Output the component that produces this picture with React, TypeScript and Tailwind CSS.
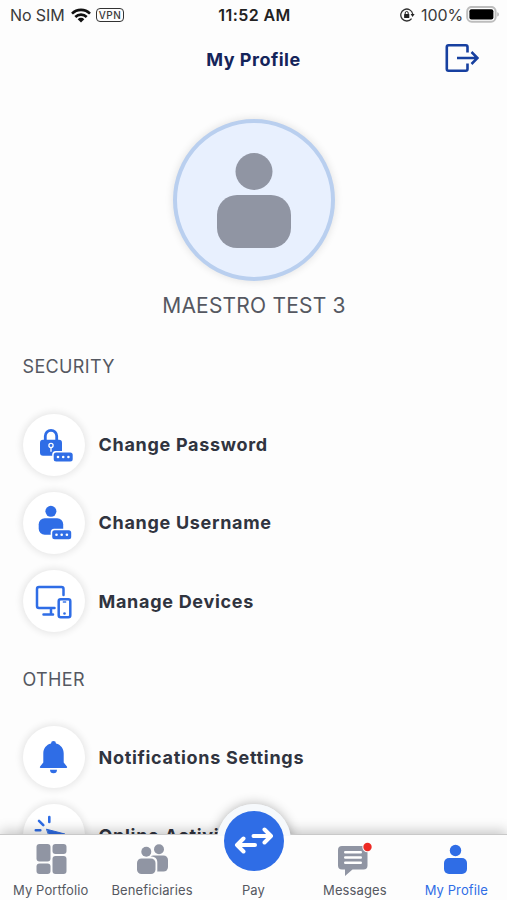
import type { ReactNode } from "react";

const BLUE = "#2f6de6";
const GREY = "#9095a3";

const StatusBar = () => (
  <div className="flex h-[30px] shrink-0 items-center text-[16px] leading-none text-[#3a3a3a]">
    <div className="flex flex-1 items-center pl-[10px]">
      <span className="w-[61px] whitespace-nowrap tracking-[-0.1px]">No SIM</span>
      <svg width="20" height="15" viewBox="0 0 20 15" fill="none" stroke="#111" strokeWidth="2.6">
        <path d="M1 5.6a12.7 12.7 0 0 1 18 0" />
        <path d="M4.3 9a8 8 0 0 1 11.4 0" />
        <path d="M10 14.5 6.7 11.2a4.7 4.7 0 0 1 6.6 0Z" fill="#111" stroke="none" />
      </svg>
      <span className="ml-[5px] flex h-[14px] w-[28px] items-center justify-center rounded-[4px] border-[1.5px] border-[#333] text-[10px] font-medium tracking-[0.4px]">
        VPN
      </span>
    </div>
    <span className="text-[16px] font-semibold tracking-[0.4px] text-[#222]">11:52 AM</span>
    <div className="flex flex-1 items-center justify-end pr-[8px]">
      <svg width="15" height="14" viewBox="0 0 15 14" fill="none">
        <path d="M11.6 10.6A6 6 0 1 1 12.7 6" stroke="#333" strokeWidth="1.3" />
        <path d="M10.6 6h4l-2 3Z" fill="#222" />
        <path d="M5.2 6.5V5a1.5 1.5 0 0 1 3 0v1.5" stroke="#222" />
        <rect x="4.1" y="6" width="5.2" height="4" rx=".6" fill="#222" />
      </svg>
      <span className="ml-[6px] tracking-[-0.1px]">100%</span>
      <svg className="ml-[3px]" width="33" height="18" viewBox="0 0 33 18">
        <rect x="1.2" y=".9" width="28.4" height="14.8" rx="4.5" fill="#fff" stroke="#bdbdbd" strokeWidth="2" />
        <rect x="3.4" y="3.2" width="24" height="10.2" rx="2" fill="#000" />
        <path d="M31.4 6.2c1.8.6 1.8 3.8 0 4.4Z" fill="#aaa" />
      </svg>
    </div>
  </div>
);

const Dots = ({ x, y }: { x: number; y: number }) => (
  <g transform={`translate(${x} ${y})`}>
    <rect x="-1.5" y="-1.5" width="22" height="12" rx="3.5" fill="#fff" />
    <rect width="19" height="9" rx="2.5" fill={BLUE} />
    <g fill="#fff">
      <circle cx="4.3" cy="4.5" r="1.3" />
      <circle cx="9.5" cy="4.5" r="1.3" />
      <circle cx="14.7" cy="4.5" r="1.3" />
    </g>
  </g>
);

const LockIcon = () => (
  <g transform="translate(-0.5 -0.7)">
    <path d="M25.3 28v-5.2a5.7 5.7 0 0 1 11.4 0V28" fill="none" stroke={BLUE} strokeWidth="2.8" />
    <rect x="20" y="26.5" width="22" height="16" rx="3" fill={BLUE} />
    <circle cx="31" cy="32.2" r="2.1" fill="none" stroke="#fff" strokeWidth="1.3" />
    <path d="M31 34.3v4.2" stroke="#fff" strokeWidth="1.3" />
    <Dots x={33.7} y={39.2} />
  </g>
);

const UserIcon = () => (
  <g transform="translate(-0.3 -0.7)">
    <circle cx="30.7" cy="20" r="5.5" fill={BLUE} />
    <rect x="18.5" y="27" width="24.5" height="16.5" rx="6" fill={BLUE} />
    <Dots x={32} y={39} />
  </g>
);

const DevicesIcon = () => (
  <g transform="translate(-1 0)" fill="none" stroke={BLUE} strokeWidth="2.5">
    <path d="M44 25v-6a2 2 0 0 0-2-2H19.5a2 2 0 0 0-2 2v17a2 2 0 0 0 2 2H35M31.5 38v6M24 44.5h9.5" strokeLinecap="round" />
    <rect x="39.2" y="29.2" width="11.6" height="18.1" rx="2" />
    <path d="M43.3 32h3.4" strokeWidth="1.4" />
    <circle cx="45" cy="43.5" r="1.3" fill={BLUE} stroke="none" />
  </g>
);

const BellIcon = () => (
  <g transform="translate(-0.5 0)" fill={BLUE}>
    <path d="M33.5 15a2.5 2.5 0 0 1 2.5 2.4c4.8 1.2 7.7 5 7.7 10.2v9l3.2 3.9c.6.8.2 1.5-.7 1.5H20.8c-.9 0-1.3-.7-.7-1.5l3.2-3.9v-9c0-5.2 2.9-9 7.7-10.2a2.5 2.5 0 0 1 2.5-2.4Z" />
    <path d="M30 43.8h7a3.5 3.5 0 0 1-7 0Z" />
  </g>
);

const ClickIcon = () => (
  <g transform="translate(-0.7 0)" stroke={BLUE} strokeWidth="2.6" strokeLinecap="round">
    <path d="M29.5 13v5M19.2 16.8l4.3 4.3M16 26.3h4.5" />
    <path d="m27 25.3 18 4.7-8 3-4 8Z" fill={BLUE} strokeWidth="1" />
  </g>
);

const Row = ({ label, children }: { label: string; children: ReactNode }) => (
  <div className="flex h-[78.2px] shrink-0 items-center">
    <div className="size-[62px] shrink-0 rounded-full bg-white shadow-[0_0_7px_2px_rgba(0,0,0,0.09)]">
      <svg width="62" height="62" viewBox="2.5 0 62 62">
        {children}
      </svg>
    </div>
    <span className="ml-[14px] whitespace-nowrap text-[18px] font-bold tracking-[0.7px] text-[#30343f]">{label}</span>
  </div>
);

const Section = ({ title, children }: { title: string; children: ReactNode }) => (
  <section className="shrink-0 pl-[22.5px]">
    <h2 className="flex h-[78px] items-center text-[18px] tracking-[0.35px] text-[#555861]">{title}</h2>
    {children}
  </section>
);

const Tab = ({ label, active, children }: { label: string; active?: boolean; children?: ReactNode }) => (
  <button className="flex w-[101.4px] flex-col items-center">
    <svg className="mt-[8px] overflow-visible" width="34" height="34" viewBox="0 0 34 34" fill={active ? BLUE : GREY}>
      {children}
    </svg>
    <span
      className={
        active
          ? "mt-[6px] whitespace-nowrap text-[13px] leading-[16px] tracking-[0.1px] text-[#2f6de6]"
          : "mt-[6px] whitespace-nowrap text-[13px] leading-[16px] tracking-[0.1px] text-[#555861]"
      }
    >
      {label}
    </span>
  </button>
);

const TabBar = () => (
  <nav className="absolute inset-x-0 bottom-0 h-[66px]">
    {/* Raised ring behind the pay button */}
    <div className="absolute -top-[30px] left-[217px] size-[74px] rounded-full bg-[#f6f9fc] shadow-[0_0_12px_rgba(0,0,0,0.3)]" />
    <div className="absolute inset-0 border-t border-[#c9c9c9] bg-[#fdfdfd] shadow-[0_-3px_12px_rgba(0,0,0,0.22)]" />
    <div className="absolute -top-[30px] left-[217px] h-[32px] w-[74px] overflow-hidden">
      <div className="size-[74px] rounded-full bg-[#f6f9fc]" />
    </div>
    <div className="relative flex">
      <Tab label="My Portfolio">
        <rect x="2.5" y="2" width="14" height="17.5" rx="3" />
        <rect x="18.5" y="2" width="14" height="10" rx="3" />
        <rect x="2.5" y="21.5" width="14" height="10.5" rx="3" />
        <rect x="18.5" y="14" width="14" height="18" rx="3" />
      </Tab>
      <Tab label="Beneficiaries">
        <circle cx="24" cy="7.3" r="5" />
        <rect x="14" y="13.5" width="19" height="16" rx="4.5" />
        <rect x=".3" y="14.5" width="22" height="20" rx="5.5" fill="#fdfdfd" />
        <circle cx="11.3" cy="9.8" r="6.4" fill="#fdfdfd" />
        <circle cx="11.3" cy="9.8" r="5" />
        <rect x="2" y="16.5" width="18.5" height="15.5" rx="4.5" />
      </Tab>
      <Tab label="Pay" />
      <Tab label="Messages">
        <path d="M4 4h21.5a4 4 0 0 1 4 4v15.5a4 4 0 0 1-4 4H14.5L7 34V27.5H4a4 4 0 0 1-4-4V8a4 4 0 0 1 4-4Z" />
        <path d="M7.2 10.2h15.6M7.2 15.5h15.6M7.2 20.8h15.6" stroke="#fff" strokeWidth="2.4" strokeLinecap="round" />
        <circle cx="29.5" cy="5" r="5.2" fill="#fdfdfd" />
        <circle cx="29.5" cy="5" r="4.2" fill="#ed2a24" />
      </Tab>
      <Tab label="My Profile" active>
        <circle cx="16.5" cy="8.5" r="5.7" />
        <rect x="5" y="16" width="23" height="16" rx="5" />
      </Tab>
    </div>
    <div className="absolute -top-[23px] left-[224px] size-[60px] rounded-full bg-[#2f6de6]">
      <svg width="60" height="60" viewBox="0 0 60 60" fill="none" stroke="#fff" strokeWidth="4" strokeLinecap="round" strokeLinejoin="round">
        <path d="M29.5 25h17M40.5 18.5 47 25l-6.5 6.5M31 34H13M19.5 27.5 13 34l6.5 6.5" />
      </svg>
    </div>
  </nav>
);

export default function App() {
  return (
    <div className="relative flex h-[900px] w-[507px] flex-col overflow-hidden bg-[#fdfdfd] font-['Inter',sans-serif]">
      <StatusBar />
      <header className="grid h-[57px] shrink-0 grid-cols-3 items-center">
        <h1 className="col-start-2 pt-px text-center text-[18px] font-bold tracking-[0.5px] text-[#14245a]">My Profile</h1>
        <svg className="mr-[28px] mb-[2px] justify-self-end" width="34" height="28" viewBox="0 0 34 28" fill="none" stroke="#1740a0" strokeWidth="2.6">
          <path d="M22.5 8.5V3a1.7 1.7 0 0 0-1.7-1.7H3.5A1.7 1.7 0 0 0 1.8 3v22a1.7 1.7 0 0 0 1.7 1.7h17.3a1.7 1.7 0 0 0 1.7-1.7v-5.5" />
          <path d="M12 14h20M26.5 8l6 6-6 6" strokeWidth="2.5" />
        </svg>
      </header>
      <div className="flex h-[240.6px] shrink-0 flex-col items-center pt-[32px]">
        <div className="ml-px flex size-[162px] items-center justify-center rounded-full border-4 border-[#b9cfef] bg-[#e8f0fe] shadow-[0_0_9px_rgba(0,0,0,0.12)]">
          <svg width="74" height="96" viewBox="0 0 74 96" fill={GREY}>
            <circle cx="37" cy="19.5" r="18.5" />
            <rect y="43" width="74" height="53" rx="20" />
          </svg>
        </div>
        <p className="mt-[9px] ml-px text-[21px] leading-[32px] tracking-[0.2px] text-[#555861]">MAESTRO TEST 3</p>
      </div>
      <Section title="SECURITY">
        <Row label="Change Password"><LockIcon /></Row>
        <Row label="Change Username"><UserIcon /></Row>
        <Row label="Manage Devices"><DevicesIcon /></Row>
      </Section>
      <Section title="OTHER">
        <Row label="Notifications Settings"><BellIcon /></Row>
        <Row label="Online Activity"><ClickIcon /></Row>
      </Section>
      <TabBar />
    </div>
  );
}
